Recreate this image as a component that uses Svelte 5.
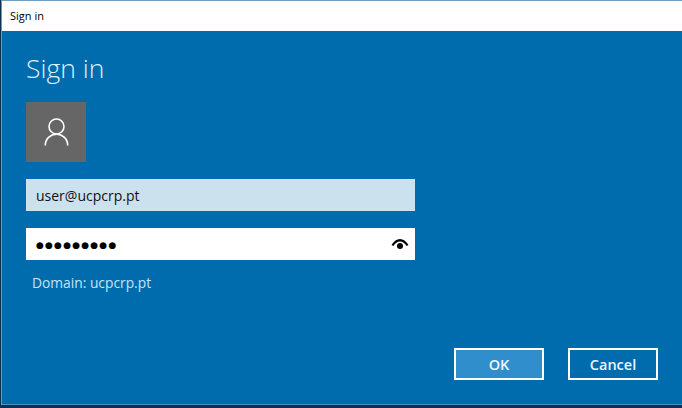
<script>
  let user = $state('user@ucpcrp.pt');
  const dots = '●●●●●●●●●';
</script>

<div class="dialog">
  <div class="titlebar">Sign in</div>

  <div class="content">
    <h1>Sign in</h1>

    <div class="avatar">
      <svg width="36" height="30" viewBox="0 0 36 30" fill="none" stroke="#fff" stroke-width="1.6">
        <circle cx="18.500" cy="9.500" r="7.500" />
        <path d="M7.300 28.500c0-6.500 5-11.300 11.200-11.300s11.200 4.800 11.200 11.300" />
      </svg>
    </div>

    <div class="field username">{user}</div>

    <div class="field password">
      <span class="dots">{dots}</span>
      <svg class="eye" width="18" height="12" viewBox="0 0 18 12">
        <path d="M.5 7C2.800 3 5.800 1 9 1s6.200 2 8.500 6l-2 1C13.800 5.200 11.500 3.500 9 3.500S4.200 5.200 2.500 8z" fill="#000" />
        <circle cx="9" cy="8" r="3" fill="#000" />
      </svg>
    </div>

    <div class="domain">Domain: ucpcrp.pt</div>

    <div class="actions">
      <button class="ok">OK</button>
      <button>Cancel</button>
    </div>
  </div>
</div>

<style>
  :global(body) {
    background: #0c2f52;
  }

  .dialog {
    width: 680px;
    height: 405px;
    margin-left: 2px;
    display: flex;
    flex-direction: column;
    box-sizing: border-box;
    border-top: 1px solid #6f9dbd;
    border-bottom: 1px solid #4f8fbb;
    background: #006bad;
    font-family: "Open Sans", "Noto Sans", sans-serif;
    box-shadow: -1px 0 0 #5f9cc6;
  }

  .titlebar {
    height: 30px;
    line-height: 30px;
    padding-left: 8px;
    background: #fff;
    color: #000;
    font-size: 11px;
  }

  .content {
    flex: 1;
    display: flex;
    flex-direction: column;
    padding: 0 24px;
  }

  h1 {
    margin: 18px 0 0;
    height: 53px;
    color: #dff1fb;
    font-size: 26.500px;
    font-weight: 300;
    line-height: 38px;
  }

  .avatar {
    width: 60px;
    height: 60px;
    display: flex;
    align-items: center;
    justify-content: center;
    background: #666;
  }

  .field {
    width: 389px;
    height: 32px;
    display: flex;
    align-items: center;
    justify-content: space-between;
    box-sizing: border-box;
    padding: 0 6px 0 10px;
    color: #111;
    font-size: 14px;
  }

  .username {
    margin-top: 17px;
    background: #cbe1ee;
  }

  .password {
    margin-top: 17px;
    background: #fff;
  }

  .dots {
    padding-top: 1px;
    font-family: "DejaVu Sans", sans-serif;
    font-size: 9px;
    letter-spacing: 1.200px;
    color: #000;
  }

  .domain {
    margin: 7px 0 0 6px;
    color: #c4e5f7;
    font-size: 13.800px;
    line-height: 32px;
  }

  .actions {
    display: flex;
    justify-content: flex-end;
    gap: 24px;
    margin-top: 49px;
  }

  button {
    width: 90px;
    height: 32px;
    padding: 0;
    border: 2px solid #fff;
    background: transparent;
    color: #eef7fc;
    font-family: inherit;
    font-size: 14.500px;
    font-weight: 600;
  }

  .ok {
    background: #2f8ecb;
  }
</style>
